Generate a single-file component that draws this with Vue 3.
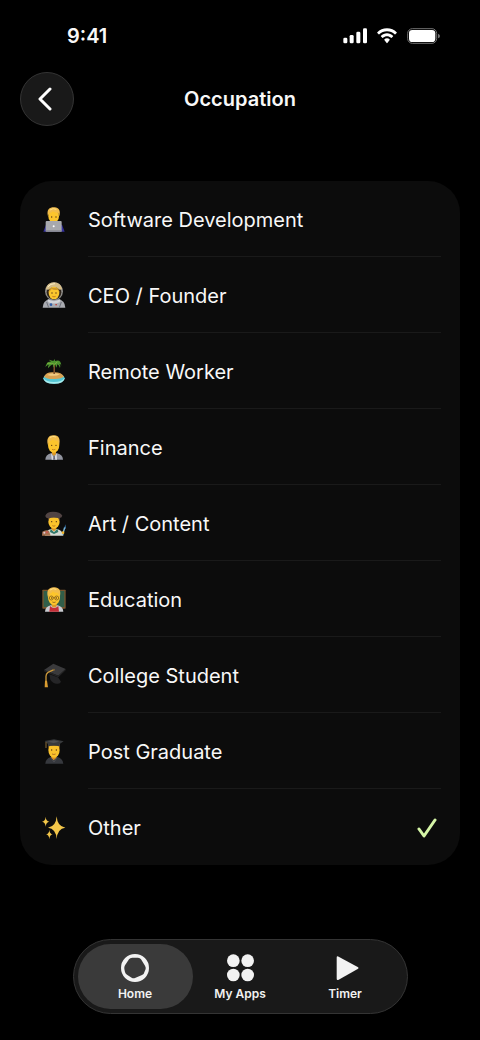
<template>
  <div class="screen">
    <div class="status-bar">
      <span class="status-bar__time">9:41</span>
      <div class="status-bar__icons" aria-hidden="true">
        <svg class="status-bar__signal" viewBox="0 0 72 48" fill="#fff">
          <rect x="1" y="29" width="12" height="17" rx="4" />
          <rect x="20" y="21" width="12" height="25" rx="4" />
          <rect x="40" y="11" width="12" height="35" rx="4" />
          <rect x="60" y="1" width="12" height="45" rx="4" />
        </svg>
        <svg class="status-bar__wifi" viewBox="0 0 60 48" fill="#fff">
          <path d="M30 1C18.500 1 8 5.500 1 13q-1 1 0 2l4 4q1 1 2 0C13 13 21 10 30 10s17 3 23 9q1 1 2 0l4-4q1-1 0-2C52 5.500 41.500 1 30 1Z" />
          <path d="M30 16c-7 0-13.500 2.700-18 7.200q-1 1 0 2l4 4q1 1 2 0c3-3 7.500-4.800 12-4.800s9 1.800 12 4.800q1 1 2 0l4-4q1-1 0-2C43.500 18.700 37 16 30 16Z" />
          <path d="M30 31c-3.200 0-6 1.200-8 3.200q-1 1 0 2l7 8.800q1 1 2 0l7-8.800q1-1 0-2C36 32.200 33.200 31 30 31Z" />
        </svg>
        <svg class="status-bar__battery" viewBox="0 0 99 48">
          <rect x="2" y="2" width="87" height="44" rx="14" fill="none" stroke="#707070" stroke-width="3" />
          <rect x="6" y="6" width="79" height="36" rx="10" fill="#fff" />
          <path d="M93 17q6 2 6 7t-6 7Z" fill="#707070" />
        </svg>
      </div>
    </div>

    <header class="header">
      <button class="header__back" type="button" aria-label="Back">
        <svg viewBox="0 0 14 24" fill="none" stroke="#fff" stroke-width="3" stroke-linecap="round" stroke-linejoin="round">
          <path d="M12 2 2 12l10 10" />
        </svg>
      </button>
      <h1 class="header__title">Occupation</h1>
    </header>

    <main class="options" role="radiogroup" aria-label="Occupation">
      <label v-for="item in occupations" :key="item.id" class="option">
        <input v-model="selected" class="option__input" type="radio" name="occupation" :value="item.id" />
        <svg class="option__emoji" viewBox="0 0 78 78" aria-hidden="true">
          <g v-if="item.id === 'software'">
            <path d="M7 77 15 56h48l8 21Z" fill="#34309b" />
            <ellipse cx="38" cy="31" rx="16" ry="19" fill="#fcc52c" />
            <path d="M21 31C16 11 25 4 39 4c14-1 21 10 16 27l-4-11q-9 1-15-4-4 5-11 5Z" fill="#f2bd4c" />
            <path d="M27 12q9-7 19-2" fill="none" stroke="#ffe08a" stroke-width="3" />
            <circle cx="32" cy="33" r="2" fill="#553211" />
            <circle cx="45" cy="33" r="2" fill="#553211" />
            <rect x="14" y="45" width="48" height="32" rx="3" fill="#a7a8ad" />
            <path d="M14 73h48v4H14Z" fill="#85868d" />
            <circle cx="38" cy="61" r="3" fill="#fff" />
          </g>
          <g v-else-if="item.id === 'ceo'">
            <path d="M5 77q1-21 20-25h28q19 4 20 25Z" fill="#a9abb1" />
            <path d="m17 60 6 17M61 60l-6 17" stroke="#6d6f79" stroke-width="3" />
            <circle cx="39" cy="28" r="27" fill="#8f8e8b" />
            <circle cx="39" cy="31" r="22" fill="#30261b" />
            <path d="M14 22Q19 1 39 1t25 21l-8 1Q40 9 22 23Z" fill="#d5bd89" />
            <path d="M20 15Q29 4 42 5" fill="none" stroke="#fff0c5" stroke-width="3" />
            <ellipse cx="39" cy="33" rx="16" ry="19" fill="#fbc62d" />
            <path d="M23 31q0-14 16-14t16 14l-5-8q-11 2-18-2-4 5-9 10Z" fill="#cd962b" />
            <circle cx="33" cy="33" r="2" fill="#5a3515" />
            <circle cx="45" cy="33" r="2" fill="#5a3515" />
            <path d="M34 43q5 3 10 0" fill="none" stroke="#aa5b18" stroke-width="2" />
            <path d="M20 51q19 13 38 0l-2 10q-17 7-34 0Z" fill="#d3d5da" />
            <circle cx="30" cy="68" r="4" fill="#315da7" />
            <rect x="43" y="66" width="5" height="4" fill="#be4a46" />
          </g>
          <g v-else-if="item.id === 'remote'">
            <ellipse cx="39" cy="61" rx="32" ry="16" fill="#54c6d4" />
            <path d="M7 59q8 13 32 13t32-13q0 18-32 18T7 59Z" fill="#a6edef" />
            <path d="M9 56q7-15 29-13 23-1 31 13-13 8-30 7-20 1-30-7Z" fill="#d8a153" />
            <path d="M18 51q18-10 38-2-12 8-38 2Z" fill="#f1ca83" />
            <path d="m38 16-1 32h5V16Z" fill="#80502b" />
            <path d="M38 17Q20 2 13 27q7-7 11-7-4 3-3 11 8-11 16-12-3 6 0 10l4-10q4 2 4 10 5-4 3-10 7 2 9 11 3-7-2-12 6 0 6 6Q60 3 42 9l-1-6-4 6-13-4 5 6Z" fill="#4c922e" />
            <path d="m18 16 14 0 8 3 9-7" fill="none" stroke="#91bd47" stroke-width="2" />
          </g>
          <g v-else-if="item.id === 'finance'">
            <path d="M13 77q1-15 16-19h20q16 4 17 19Z" fill="#9295a0" />
            <path d="m30 57 9 15 8-15 1 20H32Z" fill="#d9dbe0" />
            <path d="M38 66h3l2 11h-7Z" fill="#666875" />
            <path d="M33 47h12v13l-6 6-6-6Z" fill="#db9824" />
            <ellipse cx="38" cy="33" rx="17" ry="23" fill="#fcc52c" />
            <path d="M21 34C15 13 24 4 37 4c15-2 23 10 17 30l-4-14q-10 1-15-4-4 6-10 6Z" fill="#f2bd4c" />
            <path d="M26 11q9-7 19-2" fill="none" stroke="#ffe08a" stroke-width="3" />
            <circle cx="32" cy="34" r="2" fill="#54330f" />
            <circle cx="45" cy="34" r="2" fill="#54330f" />
            <path d="M33 46q5 3 10 0" fill="none" stroke="#ac6519" stroke-width="2" />
          </g>
          <g v-else-if="item.id === 'art'">
            <path d="M12 77q2-16 17-20h20q15 4 18 20Z" fill="#d4d9d2" />
            <path d="m29 56 10 11 10-11 3 10-13 6-12-6Z" fill="#2f7869" />
            <path d="M31 47h15v11l-7 6-8-6Z" fill="#d99223" />
            <ellipse cx="39" cy="35" rx="17" ry="21" fill="#fbc32b" />
            <path d="M21 35q-2-18 8-20h20q11 6 7 20l-5-13H26Z" fill="#574031" />
            <path d="M13 17Q17 5 36 5q22 0 28 12-2 9-13 7-14-4-27 1-10 0-11-8Z" fill="#514443" />
            <circle cx="32" cy="35" r="2" fill="#543313" />
            <circle cx="46" cy="35" r="2" fill="#543313" />
            <path d="M34 47q5 3 9 0" fill="none" stroke="#9d5620" stroke-width="2" />
            <path d="M4 65q11-8 20-2l5 14H3Z" fill="#a77451" />
            <circle cx="10" cy="68" r="3" fill="#e2c8d5" />
            <circle cx="18" cy="67" r="3" fill="#d05354" />
            <path d="m65 75 6-23" stroke="#8fcbe7" stroke-width="4" />
            <path d="m70 55 3-12 2 13Z" fill="#3e80b9" />
            <circle cx="66" cy="68" r="4" fill="#f2b42b" />
          </g>
          <g v-else-if="item.id === 'education'">
            <rect x="4" y="11" width="70" height="57" rx="2" fill="#79552d" />
            <rect x="8" y="15" width="62" height="48" fill="#315e49" />
            <path d="M12 77q1-15 17-19h21q16 4 17 19Z" fill="#c9cbd0" />
            <path d="M27 60q12 12 25 0l2 17H25Z" fill="#c52e37" />
            <path d="M32 48h15v13q-7 7-15 0Z" fill="#dc9827" />
            <ellipse cx="39" cy="34" rx="18" ry="23" fill="#fcc52c" />
            <path d="M21 34C15 13 24 5 38 4c16-1 24 10 18 30l-5-14q-10 2-15-4-4 7-10 7Z" fill="#f2bd4c" />
            <path d="M27 12q9-7 19-2" fill="none" stroke="#ffe08a" stroke-width="3" />
            <g fill="none" stroke="#6b4c1c" stroke-width="2">
              <circle cx="31" cy="36" r="6" />
              <circle cx="47" cy="36" r="6" />
              <path d="M37 35h4M34 48q5 3 10 0" />
            </g>
            <circle cx="32" cy="36" r="2" fill="#593a16" />
            <circle cx="46" cy="36" r="2" fill="#593a16" />
          </g>
          <g v-else-if="item.id === 'college'">
            <path d="m25 37 26 9 9 13q-3 7-11 6-12 1-21-12Z" fill="#252527" />
            <path d="m37 5 37 16-22 20L9 24Z" fill="#3a3a3c" />
            <path d="m9 24 43 17 22-20v4L52 46 9 28Z" fill="#242425" />
            <path d="m39 23-18 8q-6 4-6 12v15" fill="none" stroke="#c9973a" stroke-width="4" />
            <path d="m12 56 6 0 3 20H11Z" fill="#d99c30" />
            <circle cx="39" cy="23" r="3" fill="#766038" />
          </g>
          <g v-else-if="item.id === 'graduate'">
            <path d="M13 77q1-15 16-20h21q15 5 17 20Z" fill="#36383d" />
            <path d="M31 48h15v12l-8 7-7-7Z" fill="#d88f20" />
            <ellipse cx="39" cy="36" rx="17" ry="23" fill="#fac22c" />
            <path d="M21 36V17h36v19l-4-13H25Z" fill="#70501f" />
            <path d="m39 4 29 6-12 8v7q-17-5-35 0v-7L11 9Z" fill="#383a3c" />
            <path d="m39 7 16 4-17 4-18-4Z" fill="#505153" />
            <path d="M15 12v18" stroke="#8a6b35" stroke-width="3" />
            <circle cx="32" cy="36" r="2" fill="#513012" />
            <circle cx="46" cy="36" r="2" fill="#513012" />
            <path d="M33 48q6 3 11 0" fill="none" stroke="#9c551b" stroke-width="2" />
            <path d="m29 59 10 13 9-13" fill="none" stroke="#4b4d52" stroke-width="3" />
          </g>
          <g v-else fill="#f4c74a">
            <path d="M47 7q2 31 26 34-24 3-26 34-2-31-26-34 24-3 26-34Z" />
            <path d="M14 8q1 14 11 15-10 1-11 15Q13 24 3 23 13 22 14 8Z" />
            <path d="M25 47q1 13 10 14-9 1-10 15-1-14-10-15 9-1 10-14Z" />
          </g>
        </svg>
        <span class="option__body">
          <span class="option__name">{{ item.name }}</span>
          <svg v-if="selected === item.id" class="option__check" viewBox="0 0 20 20" aria-hidden="true">
            <path d="m2 11 5 7L18 2" />
          </svg>
        </span>
      </label>
    </main>

    <nav class="tab-bar" aria-label="Main">
      <a
        v-for="tab in tabs"
        :key="tab.id"
        href="#"
        :class="['tab', { 'tab--active': tab.id === activeTab }]"
        :aria-current="tab.id === activeTab ? 'page' : undefined"
        @click.prevent="activeTab = tab.id"
      >
        <svg class="tab__icon" viewBox="0 0 84 84" fill="#f2f2f2" aria-hidden="true">
          <path
            v-if="tab.id === 'home'"
            fill-rule="evenodd"
            d="M42 0a42 42 0 1 1 0 84a42 42 0 1 1 0-84ZM34 11Q27 11 24 16L12 34Q9 39 10 45L12 54Q13 59 18 62L32 71Q37 74 42 72L63 63Q69 61 70 55L74 45Q75 40 72 35L60 16Q57 11 51 11Z"
          />
          <g v-else-if="tab.id === 'apps'">
            <circle cx="22" cy="20" r="19" />
            <circle cx="65" cy="20" r="19" />
            <circle cx="22" cy="63" r="19" />
            <circle cx="65" cy="63" r="19" />
          </g>
          <path v-else d="M17 11q0-6 6-3l57 31q5 3 0 6L23 77q-6 3-6-3Z" />
        </svg>
        <span class="tab__label">{{ tab.label }}</span>
      </a>
    </nav>
  </div>
</template>

<script setup>
import { ref } from 'vue';

const occupations = [
  { id: 'software', name: 'Software Development' },
  { id: 'ceo', name: 'CEO / Founder' },
  { id: 'remote', name: 'Remote Worker' },
  { id: 'finance', name: 'Finance' },
  { id: 'art', name: 'Art / Content' },
  { id: 'education', name: 'Education' },
  { id: 'college', name: 'College Student' },
  { id: 'graduate', name: 'Post Graduate' },
  { id: 'other', name: 'Other' }
];

const tabs = [
  { id: 'home', label: 'Home' },
  { id: 'apps', label: 'My Apps' },
  { id: 'timer', label: 'Timer' }
];

const selected = ref('other');
const activeTab = ref('home');
</script>

<style>
body {
  background: #000;
}
</style>

<style scoped>
.screen {
  box-sizing: border-box;
  min-height: 100vh;
  padding: 0 20px 26px;
  display: flex;
  flex-direction: column;
  background: #000;
  color: #f8f8f8;
  font-family: Inter, 'Liberation Sans', sans-serif;
}

.status-bar {
  height: 72px;
  padding: 0 20px 0 47px;
  display: flex;
  align-items: center;
  justify-content: space-between;
}

.status-bar__time {
  font-size: 20px;
  line-height: 24px;
  font-weight: 600;
}

.status-bar__icons {
  display: flex;
  align-items: center;
  gap: 10px;
}

.status-bar__icons svg {
  height: 16px;
}

.status-bar__signal {
  width: 24px;
}

.status-bar__wifi {
  width: 20px;
}

.status-bar__battery {
  width: 33px;
}

.header {
  display: grid;
  grid-template-columns: 54px 1fr 54px;
  align-items: center;
}

.header__back {
  width: 54px;
  height: 54px;
  padding: 0 4px 0 0;
  display: flex;
  align-items: center;
  justify-content: center;
  border: 1px solid #343434;
  border-radius: 50%;
  background: #191919;
  cursor: pointer;
}

.header__back svg {
  width: 14px;
  height: 24px;
}

.header__title {
  margin: 0;
  font-size: 20px;
  line-height: 24px;
  font-weight: 600;
  text-align: center;
}

.options {
  margin: 55px 0 40px;
  border-radius: 32px;
  background: #0c0c0c;
}

.option {
  height: 76px;
  padding: 0 19px 0 21px;
  display: flex;
  align-items: center;
  gap: 21px;
  position: relative;
  cursor: pointer;
}

.option__input {
  position: absolute;
  inset: 0;
  width: 100%;
  height: 100%;
  margin: 0;
  opacity: 0;
  cursor: pointer;
}

.option__emoji {
  width: 26px;
  height: 26px;
  flex-shrink: 0;
}

.option__body {
  box-sizing: border-box;
  flex: 1;
  height: 100%;
  padding: 2px 4px 0 0;
  display: flex;
  align-items: center;
  justify-content: space-between;
  border-bottom: 1px solid #1a1a1a;
}

.option:last-child .option__body {
  border-bottom-color: transparent;
}

.option__name {
  font-size: 20px;
  line-height: 24px;
}

.option__check {
  width: 20px;
  height: 20px;
  fill: none;
  stroke: #d5f5a7;
  stroke-width: 3;
  stroke-linecap: round;
  stroke-linejoin: round;
}

.tab-bar {
  box-sizing: border-box;
  width: 100%;
  max-width: 335px;
  margin: auto auto 0;
  padding: 4px;
  display: grid;
  grid-template-columns: 115px 1fr 115px;
  border: 1px solid #343434;
  border-radius: 38px;
  background: #191919;
}

.tab {
  box-sizing: border-box;
  height: 65px;
  padding-top: 2px;
  display: flex;
  flex-direction: column;
  align-items: center;
  justify-content: center;
  gap: 4px;
  border-radius: 33px;
  color: #f2f2f2;
  text-decoration: none;
}

.tab--active {
  background: #3a3a3a;
}

.tab__icon {
  width: 28px;
  height: 28px;
}

.tab__label {
  font-size: 12px;
  line-height: 16px;
  font-weight: 600;
}
</style>
